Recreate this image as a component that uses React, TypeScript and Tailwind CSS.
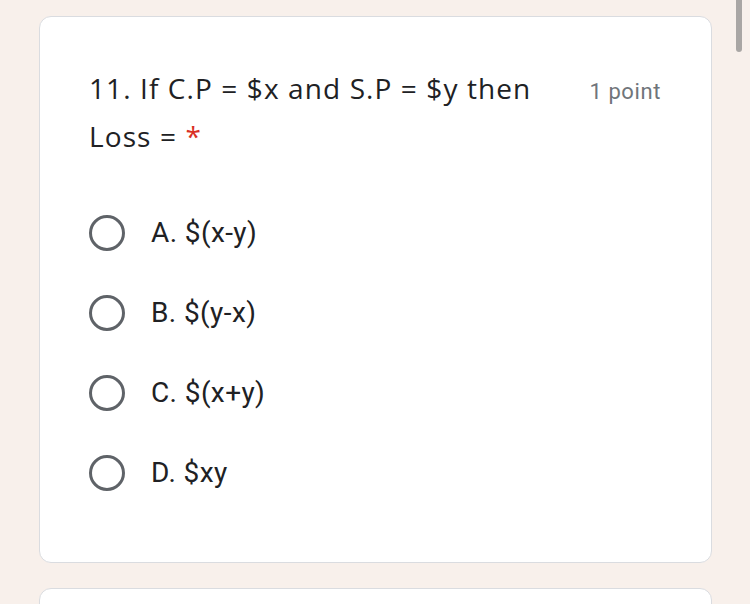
const options = ["A. $(x-y)", "B. $(y-x)", "C. $(x+y)", "D. $xy"];

function Radio() {
  return <div className="h-[36px] w-[36px] shrink-0 rounded-full border-[3.5px] border-[#5f6368]" />;
}

export default function App() {
  return (
    <div className="relative h-[604px] w-[750px] overflow-hidden bg-[#f8f0eb]">
      <div className="absolute right-[8px] top-0 h-[52px] w-[6px] rounded-b-full bg-[#a9a6a4]" />
      <div className="flex flex-col gap-[25px] pl-[39px] pr-[38px] pt-[16px]">
        <div className="rounded-[12px] border border-[#dadce0] bg-white pb-[27px] pl-[49px] pr-[50px] pt-[47px]">
          <div className="flex items-start justify-between">
            <div
              className="w-[470px] text-[28px] leading-[48px] tracking-[1.1px] text-[#202124]"
              style={{ fontFamily: "'Open Sans', 'Liberation Sans', sans-serif" }}
            >
              11. If C.P = $x and S.P = $y then Loss = <span className="text-[#d93025]">*</span>
            </div>
            <div
              className="pt-[13px] text-[22px] leading-[30px] tracking-[0.6px] text-[#70757a]"
              style={{ fontFamily: "Roboto, 'Liberation Sans', sans-serif" }}
            >
              1 point
            </div>
          </div>
          <div className="mt-[55px] flex flex-col">
            {options.map((o) => (
              <div key={o} className="flex h-[80px] items-start gap-[26px]">
                <Radio />
                <span
                  className="text-[28px] leading-[36px] tracking-[0.4px] text-[#202124]"
                  style={{ fontFamily: "Roboto, 'Liberation Sans', sans-serif" }}
                >
                  {o}
                </span>
              </div>
            ))}
          </div>
        </div>
        <div className="h-[40px] rounded-[12px] border border-[#dadce0] bg-white" />
      </div>
    </div>
  );
}
